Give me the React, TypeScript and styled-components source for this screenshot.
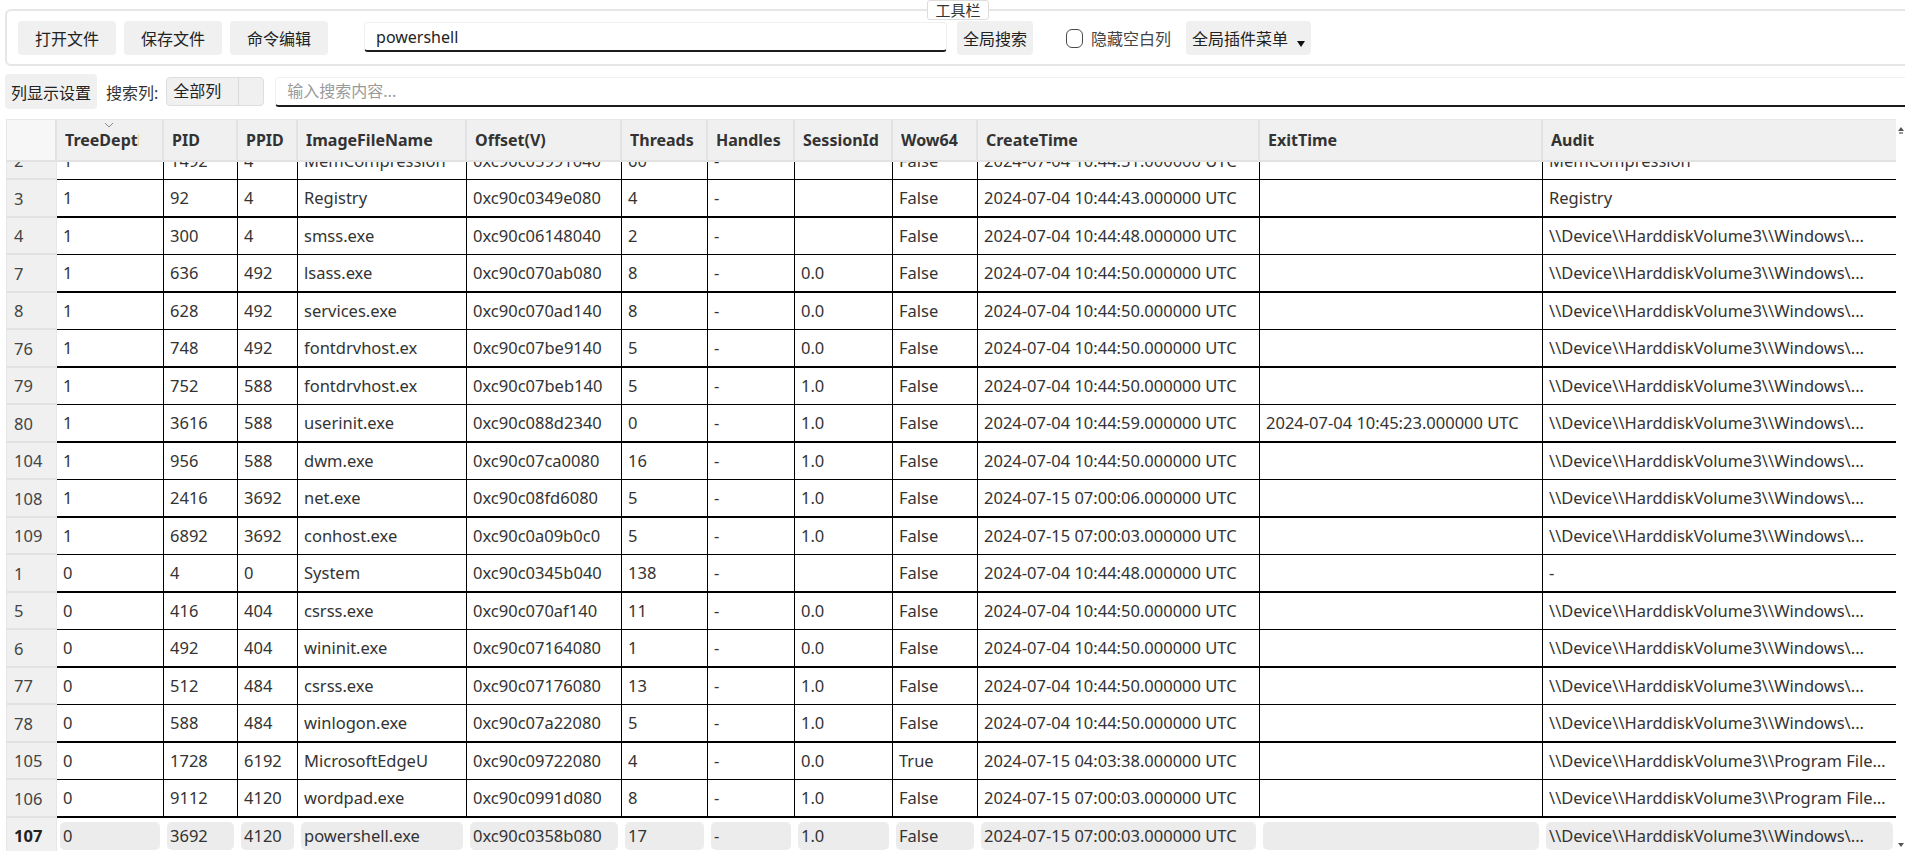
import React, { useEffect, useRef } from "react";
import styled, { createGlobalStyle } from "styled-components";

interface ProcRow {
    idx: number;
    depth: string;
    pid: string;
    ppid: string;
    name: string;
    offset: string;
    threads: string;
    handles: string;
    session: string;
    wow64: string;
    create: string;
    exit: string;
    audit: string;
}

const COLS = "51px 107px 74px 60px 169px 155px 86px 87px 98px 85px 282px 283px 353px";

const HEADERS = [
    "TreeDepth",
    "PID",
    "PPID",
    "ImageFileName",
    "Offset(V)",
    "Threads",
    "Handles",
    "SessionId",
    "Wow64",
    "CreateTime",
    "ExitTime",
    "Audit",
];

const WIN = String.raw`\\Device\\HarddiskVolume3\\Windows\...`;
const T0704 = (t: string) => `2024-07-04 ${t}.000000 UTC`;
const T0715 = (t: string) => `2024-07-15 ${t}.000000 UTC`;

const mk = (
    idx: number,
    depth: string,
    pid: string,
    ppid: string,
    name: string,
    offset: string,
    threads: string,
    session: string,
    wow64: string,
    create: string,
    exit: string,
    audit: string
): ProcRow => ({ idx, depth, pid, ppid, name, offset, threads, handles: "-", session, wow64, create, exit, audit });

const rows: ProcRow[] = [
    mk(2, "1", "1492", "4", "MemCompression", "0xc90c05991040", "60", "", "False", T0704("10:44:51"), "", "MemCompression"),
    mk(3, "1", "92", "4", "Registry", "0xc90c0349e080", "4", "", "False", T0704("10:44:43"), "", "Registry"),
    mk(4, "1", "300", "4", "smss.exe", "0xc90c06148040", "2", "", "False", T0704("10:44:48"), "", WIN),
    mk(7, "1", "636", "492", "lsass.exe", "0xc90c070ab080", "8", "0.0", "False", T0704("10:44:50"), "", WIN),
    mk(8, "1", "628", "492", "services.exe", "0xc90c070ad140", "8", "0.0", "False", T0704("10:44:50"), "", WIN),
    mk(76, "1", "748", "492", "fontdrvhost.ex", "0xc90c07be9140", "5", "0.0", "False", T0704("10:44:50"), "", WIN),
    mk(79, "1", "752", "588", "fontdrvhost.ex", "0xc90c07beb140", "5", "1.0", "False", T0704("10:44:50"), "", WIN),
    mk(80, "1", "3616", "588", "userinit.exe", "0xc90c088d2340", "0", "1.0", "False", T0704("10:44:59"), T0704("10:45:23"), WIN),
    mk(104, "1", "956", "588", "dwm.exe", "0xc90c07ca0080", "16", "1.0", "False", T0704("10:44:50"), "", WIN),
    mk(108, "1", "2416", "3692", "net.exe", "0xc90c08fd6080", "5", "1.0", "False", T0715("07:00:06"), "", WIN),
    mk(109, "1", "6892", "3692", "conhost.exe", "0xc90c0a09b0c0", "5", "1.0", "False", T0715("07:00:03"), "", WIN),
    mk(1, "0", "4", "0", "System", "0xc90c0345b040", "138", "", "False", T0704("10:44:48"), "", "-"),
    mk(5, "0", "416", "404", "csrss.exe", "0xc90c070af140", "11", "0.0", "False", T0704("10:44:50"), "", WIN),
    mk(6, "0", "492", "404", "wininit.exe", "0xc90c07164080", "1", "0.0", "False", T0704("10:44:50"), "", WIN),
    mk(77, "0", "512", "484", "csrss.exe", "0xc90c07176080", "13", "1.0", "False", T0704("10:44:50"), "", WIN),
    mk(78, "0", "588", "484", "winlogon.exe", "0xc90c07a22080", "5", "1.0", "False", T0704("10:44:50"), "", WIN),
    mk(105, "0", "1728", "6192", "MicrosoftEdgeU", "0xc90c09722080", "4", "0.0", "True", T0715("04:03:38"), "",
        String.raw`\\Device\\HarddiskVolume3\\Program Files (x86)\\Microsoft\\EdgeUpdate\\MicrosoftEdgeUpdate.exe`),
    mk(106, "0", "9112", "4120", "wordpad.exe", "0xc90c0991d080", "8", "1.0", "False", T0715("07:00:03"), "",
        String.raw`\\Device\\HarddiskVolume3\\Program Files\\Windows NT\\Accessories\\wordpad.exe`),
    mk(107, "0", "3692", "4120", "powershell.exe", "0xc90c0358b080", "17", "1.0", "False", T0715("07:00:03"), "", WIN),
];

const GlobalStyle = createGlobalStyle`
    html, body, #root {
        height: 100%;
        margin: 0;
    }
    body {
        font-family: "Noto Sans", "Noto Sans CJK SC", sans-serif;
        color: #333;
        background: #fff;
        overflow: hidden;
    }
`;

const Page = styled.div`
    height: 100vh;
    display: flex;
    flex-direction: column;
    padding-left: 5px;
    box-sizing: border-box;
`;

const Toolbar = styled.fieldset`
    margin: 0 -6px 0 0;
    padding: 1px 11px 9px;
    border: 2px solid #e6e6e6;
    border-radius: 6px;
    display: flex;
    align-items: center;
    min-width: 0;
`;

const Legend = styled.legend`
    margin-left: auto;
    margin-right: auto;
    padding: 0 7px;
    border: 1px solid #dcdcdc;
    border-radius: 3px;
    font-size: 15px;
    line-height: 18px;
    color: #333;
    background: #fff;
`;

const ToolButton = styled.button<{ $pad?: number; $gap?: number }>`
    height: 34px;
    margin-left: ${(p) => p.$gap ?? 0}px;
    padding: 0 ${(p) => p.$pad ?? 17}px;
    border: none;
    border-radius: 4px;
    background: #f0f0f0;
    font-family: inherit;
    font-size: 16px;
    color: #222;
    display: flex;
    align-items: center;
    white-space: nowrap;
    flex-shrink: 0;
`;

const MenuCaret = styled.span`
    align-self: flex-end;
    margin: 0 0 8px 9px;
    width: 0;
    height: 0;
    border-left: 4.5px solid transparent;
    border-right: 4.5px solid transparent;
    border-top: 6px solid #111;
`;

const LineInput = styled.input<{ $width?: number; $gap: number }>`
    box-sizing: border-box;
    ${(p) => (p.$width ? `width: ${p.$width}px;` : "flex: 1; min-width: 0;")}
    height: 30px;
    margin-left: ${(p) => p.$gap}px;
    padding: 0 11px;
    border: 1px solid #f0f0f0;
    border-bottom: 2px solid #1c1c1c;
    border-radius: 4px;
    font-family: inherit;
    font-size: 16px;
    color: #222;
    outline: none;
    &::placeholder {
        color: #9a9a9a;
    }
`;

const TopInput = styled(LineInput)`
    align-self: flex-start;
    margin-top: 1px;
`;

const CheckWrap = styled.label`
    display: flex;
    align-items: center;
    margin-left: 33px;
    font-size: 16px;
    color: #444;
    white-space: nowrap;
`;

const Check = styled.input`
    appearance: none;
    width: 17px;
    height: 19px;
    margin: 0 8px 0 0;
    border: 1.5px solid #4a4a4a;
    border-radius: 6px;
    background: #fff;
`;

const FilterRow = styled.div`
    display: flex;
    align-items: center;
    height: 35px;
    margin-top: 8px;
    margin-right: -6px;
`;

const SmallButton = styled(ToolButton)`
    height: 35px;
`;

const FilterLabel = styled.span`
    margin-left: 9px;
    font-size: 16px;
    color: #333;
    white-space: nowrap;
`;

const Select = styled.div`
    box-sizing: border-box;
    display: flex;
    width: 98px;
    height: 29px;
    margin-left: 8px;
    border: 1px solid #dedede;
    border-radius: 4px;
    background: #f0f0f0;
    font-size: 16px;
    color: #222;
`;

const SelectText = styled.span`
    flex: 1;
    padding-left: 6px;
    line-height: 27px;
`;

const SelectArrow = styled.span`
    width: 24px;
    border-left: 1px solid #dcdcdc;
`;

const TableWrap = styled.div`
    flex: 1;
    min-height: 0;
    display: flex;
    margin: 10px 0 0 1px;
`;

const TableMain = styled.div`
    width: 1890px;
    display: flex;
    flex-direction: column;
    min-height: 0;
`;

const HeadRow = styled.div`
    display: grid;
    grid-template-columns: ${COLS};
    height: 43px;
    box-sizing: border-box;
    border-top: 1px solid #e6e6e6;
    border-bottom: 2px solid #e2e2e2;
    background: #f0f0f0;
    flex-shrink: 0;
`;

const Corner = styled.div`
    background: #f7f7f7;
    border-left: 1px solid #e6e6e6;
    border-right: 2px solid #e2e2e2;
`;

const HeadCell = styled.div<{ $last?: boolean; $sorted?: boolean }>`
    position: relative;
    display: flex;
    align-items: center;
    padding: 0 ${(p) => (p.$sorted ? 23 : 2)}px 0 8px;
    border-right: ${(p) => (p.$last ? "none" : "2px solid #e2e2e2")};
    font-size: 16px;
    font-weight: 700;
    color: #333;
    white-space: nowrap;
    overflow: hidden;
`;

const HeadLabel = styled.span`
    overflow: hidden;
`;

const SortMark = styled.svg`
    position: absolute;
    top: 2px;
    left: 47px;
`;

const Body = styled.div`
    flex: 1;
    min-height: 0;
    overflow: hidden;
`;

const Row = styled.div<{ $thick: boolean }>`
    display: grid;
    grid-template-columns: ${COLS};
    height: ${(p) => (p.$thick ? 38 : 37)}px;
`;

const RowNum = styled.div<{ $active: boolean }>`
    background: #f0f0f0;
    border-left: 1px solid #e6e6e6;
    border-bottom: 2px solid #e2e2e2;
    border-right: 1px solid #e6e6e6;
    padding-left: 7px;
    font-size: 16.5px;
    font-weight: ${(p) => (p.$active ? 700 : 400)};
    color: ${(p) => (p.$active ? "#222" : "#444")};
    display: flex;
    align-items: center;
`;

const Cell = styled.div<{ $thick: boolean; $last: boolean; $active: boolean }>`
    box-sizing: border-box;
    border-bottom: ${(p) => (p.$thick ? 2 : 1)}px solid #000;
    border-right: ${(p) => (p.$last ? "none" : p.$active ? "1px solid #fff" : "1px solid #000")};
    padding: ${(p) => (p.$active ? "4px 3px" : "0 6px")};
    font-size: 16.5px;
    color: #333;
    line-height: 36px;
    white-space: nowrap;
    overflow: hidden;
    text-overflow: ellipsis;
`;

const ActiveBox = styled.div`
    height: 100%;
    padding: 0 3px;
    border-radius: 5px;
    background: #ececec;
    line-height: 28px;
    overflow: hidden;
    text-overflow: ellipsis;
`;

const ScrollStrip = styled.div`
    width: 9px;
    display: flex;
    flex-direction: column;
    justify-content: space-between;
    align-items: center;
    padding: 8px 0 4px;
`;

const ArrowUp = styled.span`
    width: 0;
    height: 0;
    border-left: 3px solid transparent;
    border-right: 3px solid transparent;
    border-bottom: 4px solid #555;
    box-shadow: 0 4px 0 -1px #999;
`;

const ArrowDown = styled.span`
    width: 0;
    height: 0;
    border-left: 3px solid transparent;
    border-right: 3px solid transparent;
    border-top: 4px solid #555;
`;

const App: React.FC = () => {
    const bodyRef = useRef<HTMLDivElement>(null);

    useEffect(() => {
        if (bodyRef.current) bodyRef.current.scrollTop = 19;
    }, []);

    return (
        <Page>
            <GlobalStyle />
            <Toolbar>
                <Legend>工具栏</Legend>
                <ToolButton>打开文件</ToolButton>
                <ToolButton $gap={8}>保存文件</ToolButton>
                <ToolButton $gap={8}>命令编辑</ToolButton>
                <TopInput $width={583} $gap={36} defaultValue="powershell" />
                <ToolButton $gap={10} $pad={6}>全局搜索</ToolButton>
                <CheckWrap>
                    <Check type="checkbox" />
                    隐藏空白列
                </CheckWrap>
                <ToolButton $gap={15} $pad={6}>
                    全局插件菜单
                    <MenuCaret />
                </ToolButton>
            </Toolbar>

            <FilterRow>
                <SmallButton $pad={6}>列显示设置</SmallButton>
                <FilterLabel>搜索列:</FilterLabel>
                <Select>
                    <SelectText>全部列</SelectText>
                    <SelectArrow />
                </Select>
                <LineInput $gap={11} placeholder="输入搜索内容..." />
            </FilterRow>

            <TableWrap>
                <TableMain>
                    <HeadRow>
                        <Corner />
                        {HEADERS.map((h, i) => (
                            <HeadCell key={h} $last={i === HEADERS.length - 1} $sorted={i === 0}>
                                {i === 0 && (
                                    <SortMark width="10" height="6" viewBox="0 0 10 6">
                                        <polyline points="1,1 5,5 9,1" fill="none" stroke="#8a8a8a" strokeWidth="1" />
                                    </SortMark>
                                )}
                                <HeadLabel>{h}</HeadLabel>
                            </HeadCell>
                        ))}
                    </HeadRow>
                    <Body ref={bodyRef}>
                        {rows.map((r, i) => {
                            const thick = i % 2 === 1;
                            const active = r.idx === 107;
                            const values = [
                                r.depth,
                                r.pid,
                                r.ppid,
                                r.name,
                                r.offset,
                                r.threads,
                                r.handles,
                                r.session,
                                r.wow64,
                                r.create,
                                r.exit,
                                r.audit,
                            ];
                            return (
                                <Row key={r.idx} $thick={thick}>
                                    <RowNum $active={active}>{r.idx}</RowNum>
                                    {values.map((v, j) => (
                                        <Cell key={j} $thick={thick} $last={j === values.length - 1} $active={active}>
                                            {active ? <ActiveBox>{v}</ActiveBox> : v}
                                        </Cell>
                                    ))}
                                </Row>
                            );
                        })}
                    </Body>
                </TableMain>
                <ScrollStrip>
                    <ArrowUp />
                    <ArrowDown />
                </ScrollStrip>
            </TableWrap>
        </Page>
    );
};

export default App;
